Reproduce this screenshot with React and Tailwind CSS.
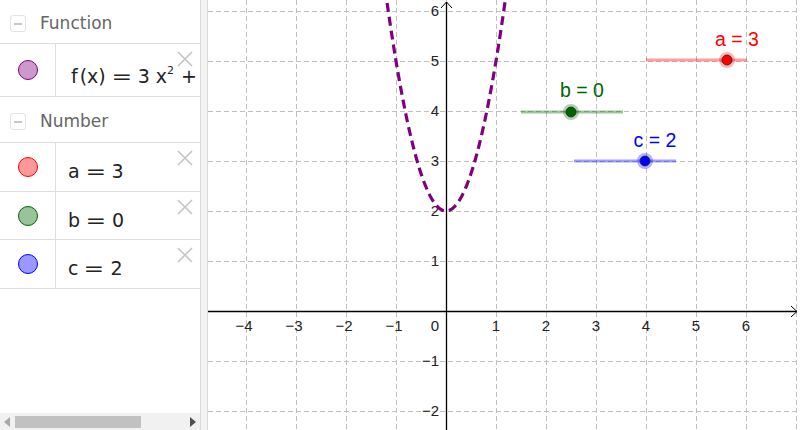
import React from 'react'

const panelFont = { fontFamily: '"DejaVu Sans", "Liberation Sans", sans-serif' }
const graphFont = '"Liberation Sans", Arial, sans-serif'

// graph geometry: origin at (446, 311), 50px per unit
const OX = 446
const OY = 311
const U = 50

function CloseIcon() {
  return (
    <svg width="16" height="16" viewBox="0 0 16 16" className="absolute right-[7px] top-[7px]">
      <path d="M1 1 L15 15 M15 1 L1 15" stroke="#c4c4c4" strokeWidth="1.6" fill="none" />
    </svg>
  )
}

function CollapseIcon() {
  return (
    <div className="w-[16px] h-[17px] rounded-[3px] border border-[#e3e3e3] flex items-center justify-center">
      <div className="w-[8px] h-[2px] bg-[#c8c8c8]" />
    </div>
  )
}

function Header({ label, top }) {
  return (
    <div className={`flex items-center gap-[14px] pl-[10px] pt-[4px] border-b border-[#dedede] ${top ? 'h-[44px]' : 'h-[46px]'}`}>
      <CollapseIcon />
      <span className="text-[17px] text-[#666]" style={panelFont}>{label}</span>
    </div>
  )
}

function Row({ fill, stroke, height, children, textPad }) {
  return (
    <div className={`flex border-b border-[#dedede] ${height}`}>
      <div className="w-[56px] border-r border-[#dedede] flex items-center justify-center">
        <div className="w-[20px] h-[20px] rounded-full border" style={{ background: fill, borderColor: stroke }} />
      </div>
      <div className={`flex-1 relative overflow-hidden ${textPad}`}>
        <div className="whitespace-nowrap text-[19px] text-[#222] leading-[24px]" style={panelFont}>{children}</div>
        <CloseIcon />
      </div>
    </div>
  )
}

function Eq() {
  return <span className="inline-block mx-[8px] scale-x-[1.3]">=</span>
}

function AlgebraPanel() {
  return (
    <div className="w-[200px] h-full flex flex-col bg-white">
      <Header label="Function" top />
      <Row fill="#cc99cc" stroke="#800080" height="h-[53px]" textPad="pl-[15px] pt-[15px]">
        f<span className="ml-[2px]">(x)</span>
        <Eq />
        3<span className="ml-[6px]">x</span>
        <span className="text-[11px] align-[9px]">2</span>
        <span className="ml-[7px]">+</span>
      </Row>
      <Header label="Number" />
      <Row fill="#ff9999" stroke="#ff0000" height="h-[49px]" textPad="pl-[12px] pt-[16px]">a<Eq />3</Row>
      <Row fill="#99c399" stroke="#006400" height="h-[48px]" textPad="pl-[12px] pt-[16px]">b<Eq />0</Row>
      <Row fill="#9999ff" stroke="#0000ff" height="h-[49px]" textPad="pl-[12px] pt-[16px]">c<Eq />2</Row>
      <div className="flex-1" />
      <div className="h-[17px] bg-[#f1f1f1] flex items-center px-[4px] gap-[5px]">
        <svg width="6" height="10" viewBox="0 0 6 10"><path d="M6 0 L0 5 L6 10 Z" fill="#a8a8a8" /></svg>
        <div className="w-[126px] h-[12px] bg-[#c1c1c1]" />
        <div className="flex-1" />
        <svg width="6" height="10" viewBox="0 0 6 10"><path d="M0 0 L6 5 L0 10 Z" fill="#505050" /></svg>
      </div>
    </div>
  )
}

function Slider({ x1, x2, y, px, color, line, halo, label, lx, ly }) {
  return (
    <g>
      <line x1={x1} y1={y} x2={x2} y2={y} stroke={line} strokeWidth="3" />
      <circle cx={px} cy={y} r="8" fill={halo} />
      <circle cx={px} cy={y} r="5" fill={color} stroke="#222" strokeWidth="0.8" />
      <text x={lx} y={ly} fill={color} fontSize="19.5" fontFamily={graphFont} textAnchor="middle">{label}</text>
    </g>
  )
}

function Graph() {
  const xs = [-4, -3, -2, -1, 1, 2, 3, 4, 5, 6]
  const ys = [-2, -1, 1, 2, 3, 4, 5, 6]
  const pts = []
  for (let p = 378; p <= 514; p += 1) {
    const u = (p - OX) / U
    pts.push(`${p},${(OY - U * (3 * u * u + 2)).toFixed(2)}`)
  }
  return (
    <svg width="592" height="430" viewBox="208 0 592 430" className="block">
      <rect x="208" y="0" width="592" height="430" fill="#fff" />
      {[-5, -4, -3, -2, -1, 0, 1, 2, 3, 4, 5, 6, 7].map((k) => (
        <line key={'v' + k} x1={OX + k * U + 0.5} y1="0" x2={OX + k * U + 0.5} y2="430" stroke="#c0c0c0" strokeDasharray="5 3" />
      ))}
      {[-2, -1, 0, 1, 2, 3, 4, 5, 6].map((k) => (
        <line key={'h' + k} x1="208" y1={OY - k * U + 0.5} x2="800" y2={OY - k * U + 0.5} stroke="#c0c0c0" strokeDasharray="5 3" />
      ))}
      {/* axes */}
      <line x1="208" y1={OY + 0.5} x2="797" y2={OY + 0.5} stroke="#000" strokeWidth="1.3" />
      <path d={`M791 ${OY - 5} L797 ${OY + 0.5} L791 ${OY + 6}`} fill="none" stroke="#000" strokeWidth="1" />
      <line x1={OX + 0.5} y1="2" x2={OX + 0.5} y2="430" stroke="#000" strokeWidth="1.3" />
      <path d={`M${OX - 5} 8 L${OX + 0.5} 2 L${OX + 6} 8`} fill="none" stroke="#000" strokeWidth="1" />
      {xs.map((k) => (
        <text key={'xl' + k} x={OX + k * U + (k < 0 ? -2 : 0)} y={OY + 20} fontSize="15" fontFamily={graphFont} textAnchor="middle" fill="#222">
          {k < 0 ? '\u2212' + -k : k}
        </text>
      ))}
      <text x={OX - 11} y={OY + 20} fontSize="15" fontFamily={graphFont} textAnchor="middle" fill="#222">0</text>
      {ys.map((k) => (
        <text key={'yl' + k} x={OX - 7} y={OY - k * U + 5} fontSize="15" fontFamily={graphFont} textAnchor="end" fill="#222">
          {k < 0 ? '\u2212' + -k : k}
        </text>
      ))}
      {/* f(x) = 3x^2 + 2 */}
      <polyline points={pts.join(' ')} fill="none" stroke="#800080" strokeWidth="3.2" strokeDasharray="9 5" />
      <Slider x1={646} x2={747} y={60} px={727} color="#ff0000" line="rgba(255,0,0,0.38)" halo="rgba(255,0,0,0.3)" label="a = 3" lx={737} ly={46} />
      <Slider x1={521} x2={623} y={112} px={571} color="#006400" line="rgba(0,100,0,0.38)" halo="rgba(0,100,0,0.3)" label="b = 0" lx={582} ly={97} />
      <Slider x1={574} x2={676} y={161} px={645} color="#0000ff" line="rgba(0,0,255,0.38)" halo="rgba(0,0,255,0.3)" label="c = 2" lx={655} ly={147} />
    </svg>
  )
}

export default function App() {
  return (
    <div className="w-[800px] h-[430px] flex overflow-hidden bg-white">
      <AlgebraPanel />
      <div className="w-[8px] h-full bg-[#f3f3f3] border-x border-[#d9d9d9]" />
      <Graph />
    </div>
  )
}
